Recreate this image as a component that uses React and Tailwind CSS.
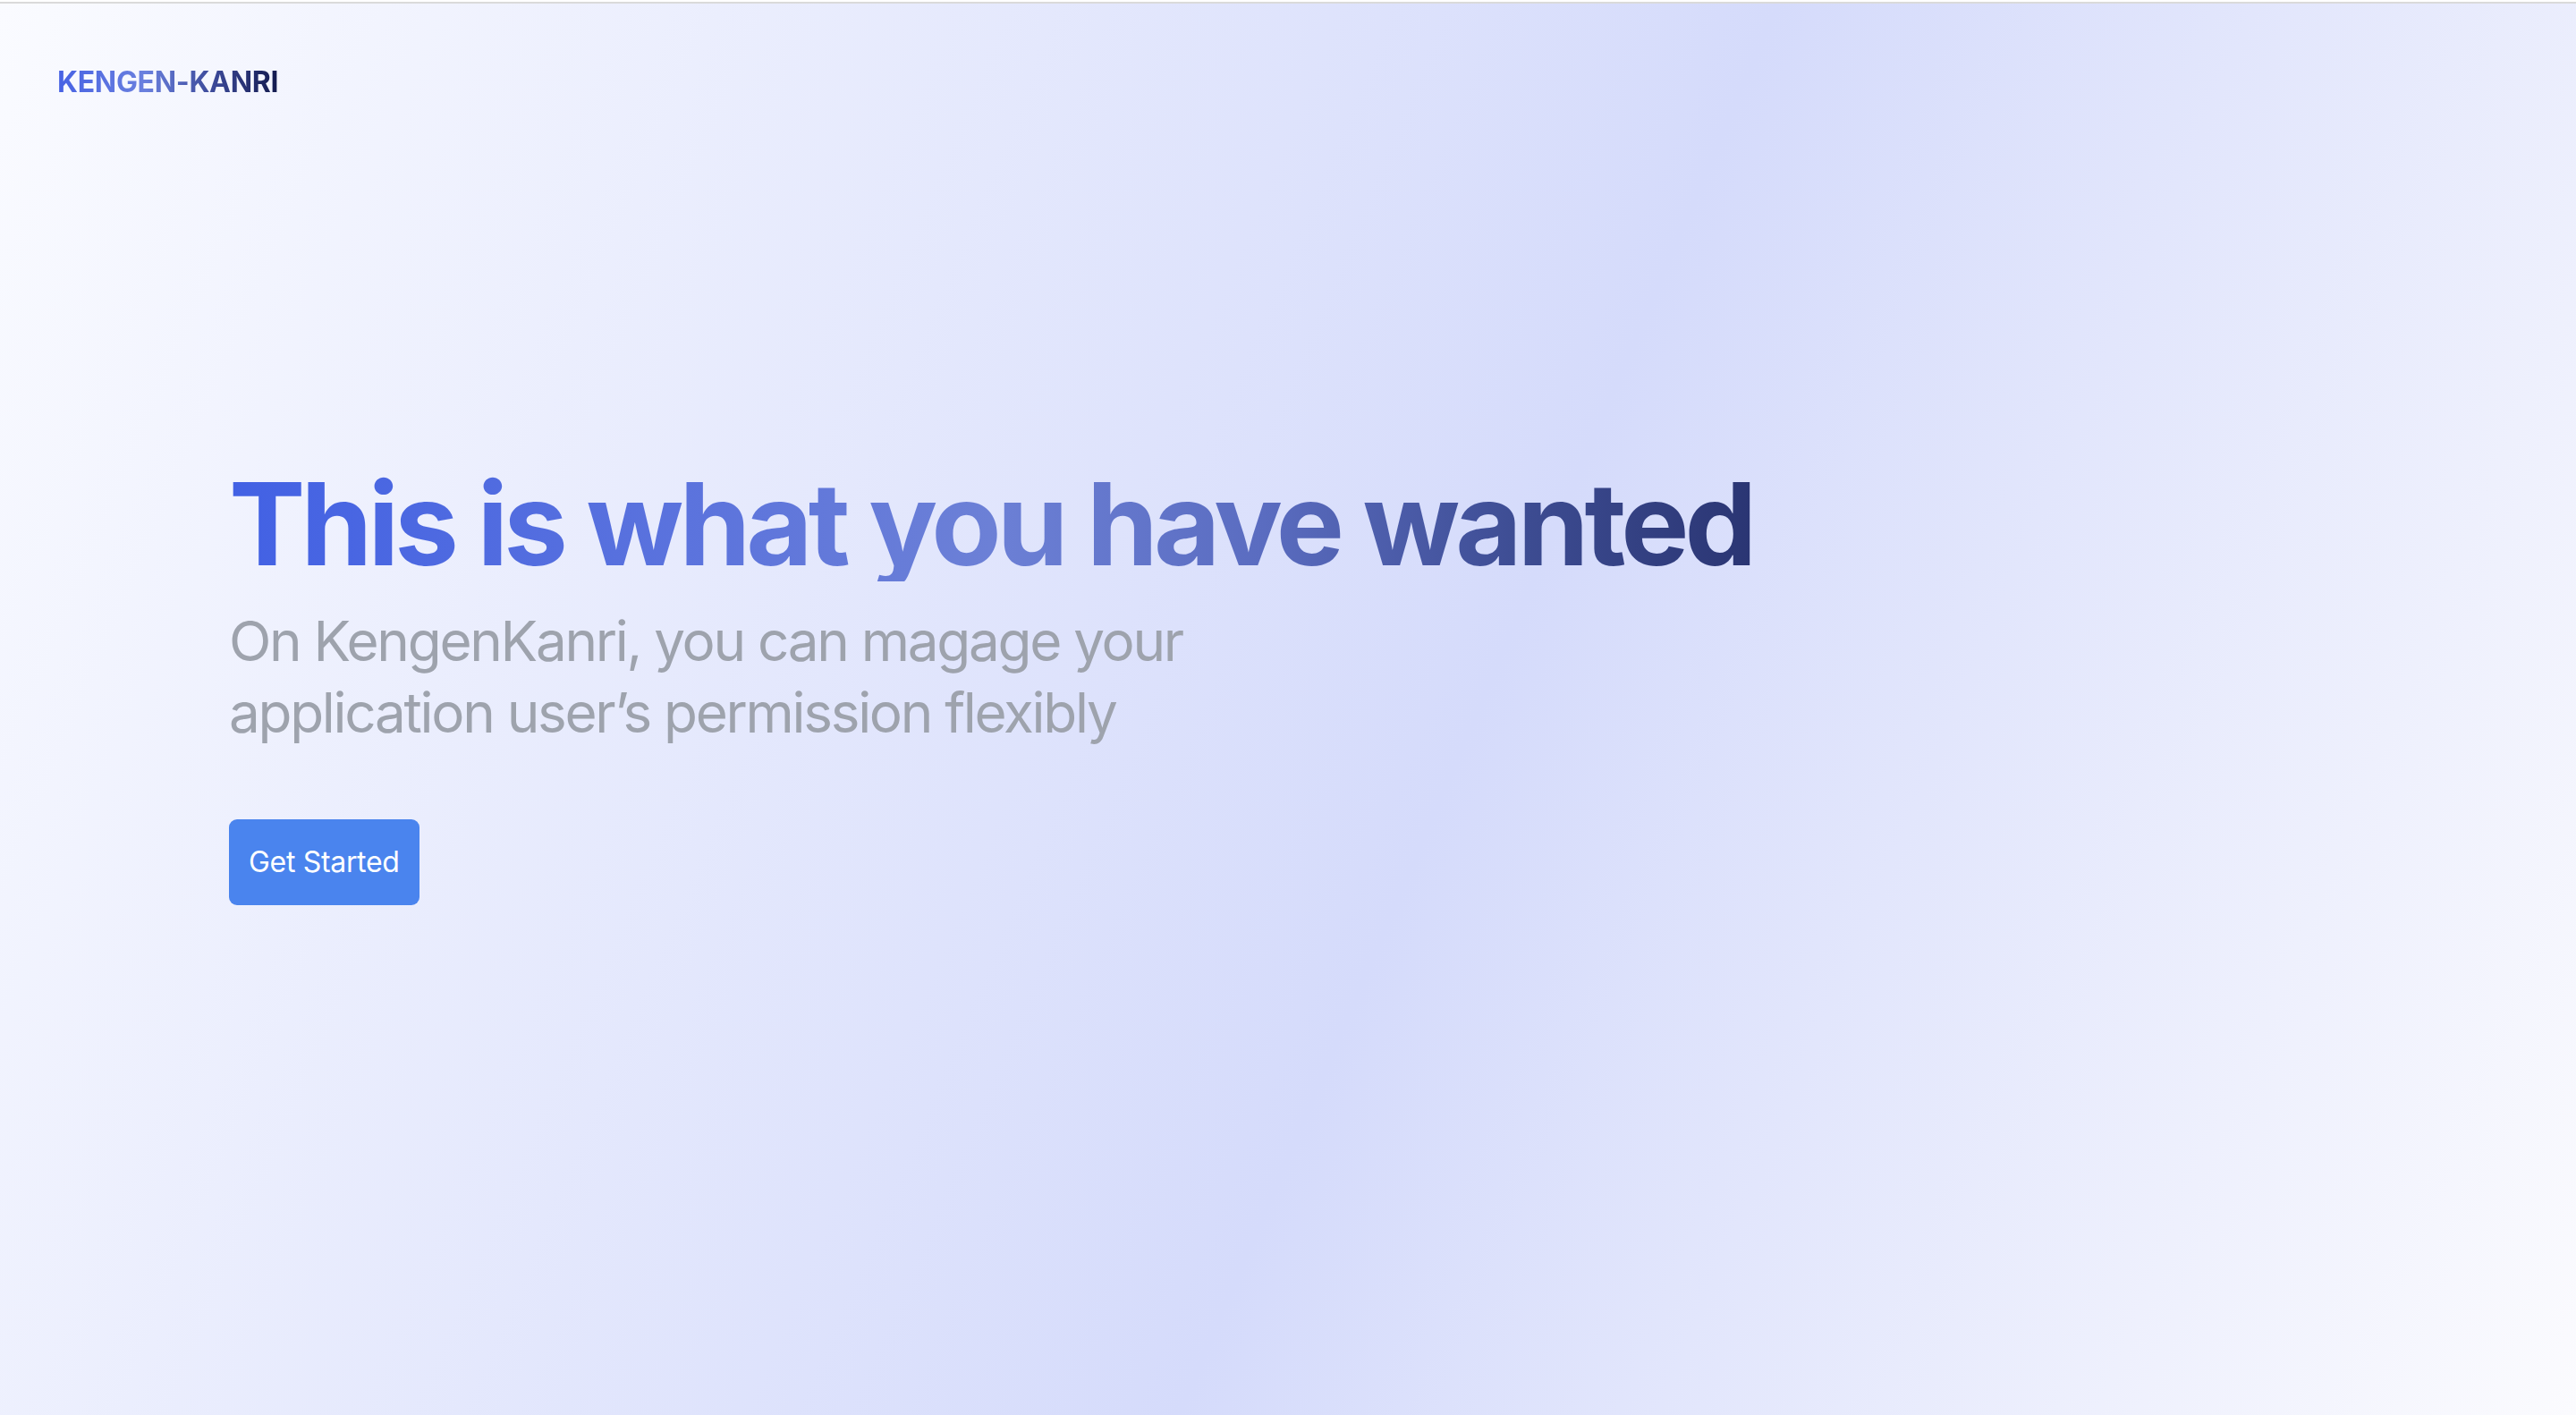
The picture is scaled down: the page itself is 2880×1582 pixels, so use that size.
const Header = () => {
  return (
    <header className="px-[64px] pt-[68px]">
      <a
        href="#"
        className="inline-block text-[32px] leading-[40px] font-bold tracking-[-0.01em] bg-[linear-gradient(90deg,#4762e4_0%,#6a80de_40%,#3c4a9a_70%,#131a4e_100%)] bg-clip-text text-transparent"
      >
        KENGEN-KANRI
      </a>
    </header>
  );
};

const Hero = () => {
  return (
    <section className="pl-[256px] pt-[410px]">
      <h1 className="inline-block text-[128px] leading-none font-bold tracking-[-0.038em] bg-[linear-gradient(90deg,#4261e4_0%,#5b73dd_30%,#6c80d6_50%,#5a6cc0_68%,#3d4c92_85%,#2a3573_100%)] bg-clip-text text-transparent">
        This is what you have wanted
      </h1>
      <p className="mt-[27px] max-w-[1100px] text-[62px] leading-[80px] tracking-[-0.037em] text-[#9ea3ad]">
        On KengenKanri, you can magage your application user’s permission
        flexibly
      </p>
      <button className="mt-[79px] h-[96px] px-[22px] rounded-[9px] bg-[#4a84ee] text-white text-[32px] leading-none tracking-[-0.01em]">
        Get Started
      </button>
    </section>
  );
};

export default function App() {
  return (
    <div className="min-h-screen font-['Inter',sans-serif]">
      <div className="h-[2px] bg-white" />
      <div className="h-[2px] bg-[#dadada]" />
      <div className="h-[1578px] bg-[linear-gradient(113deg,#fafbff_0%,#d5dbfb_56%,#fbfbfe_100%)]">
        <Header />
        <Hero />
      </div>
    </div>
  );
}
